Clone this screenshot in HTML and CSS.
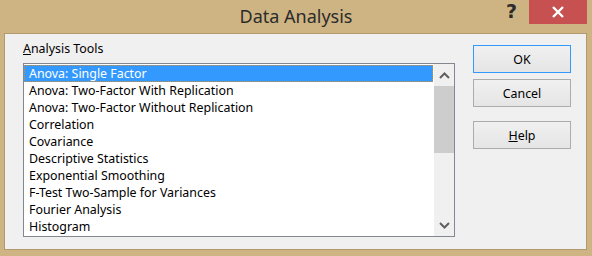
FILE: index.html
```html
<!DOCTYPE html>
<html>
<head>
<meta charset="utf-8">
<link rel="stylesheet" href="styles.css">
</head>
<body>
<div class="window">
  <div class="titlebar">
    <div class="tb-side"></div>
    <div class="title">Data Analysis</div>
    <div class="tb-side tb-controls">
      <span class="help-q">?</span>
      <span class="close-btn">
        <svg width="14" height="12" viewBox="0 0 14 12"><path d="M2 1 L12 11 M12 1 L2 11" stroke="#fff" stroke-width="2.4" fill="none"/></svg>
      </span>
    </div>
  </div>
  <div class="client">
    <div class="left">
      <div class="label"><u>A</u>nalysis Tools</div>
      <div class="listbox">
        <ul class="items">
          <li class="selected">Anova: Single Factor</li>
          <li>Anova: Two-Factor With Replication</li>
          <li>Anova: Two-Factor Without Replication</li>
          <li>Correlation</li>
          <li>Covariance</li>
          <li>Descriptive Statistics</li>
          <li>Exponential Smoothing</li>
          <li>F-Test Two-Sample for Variances</li>
          <li>Fourier Analysis</li>
          <li>Histogram</li>
        </ul>
        <div class="scrollbar">
          <div class="arrow">
            <svg width="11" height="7" viewBox="0 0 11 7"><path d="M1 6 L5.5 1.5 L10 6" stroke="#606060" stroke-width="2" fill="none"/></svg>
          </div>
          <div class="track"><div class="thumb"></div></div>
          <div class="arrow">
            <svg width="11" height="7" viewBox="0 0 11 7"><path d="M1 1 L5.5 5.5 L10 1" stroke="#606060" stroke-width="2" fill="none"/></svg>
          </div>
        </div>
      </div>
    </div>
    <div class="right">
      <button class="btn default">OK</button>
      <button class="btn">Cancel</button>
      <button class="btn help"><u>H</u>elp</button>
    </div>
  </div>
</div>
</body>
</html>
```
FILE: styles.css
```css
html, body {
  margin: 0;
  padding: 0;
  background: #cfb483;
}
.window {
  width: 592px;
  height: 256px;
  box-sizing: border-box;
  background: #cfb483;
  padding: 0 5px 6px 4px;
  display: flex;
  flex-direction: column;
  font-family: "Noto Sans", "Open Sans", sans-serif;
}
.titlebar {
  height: 33px;
  display: grid;
  grid-template-columns: 1fr auto 1fr;
  margin: 0 -5px 0 -4px;
}
.title {
  font-size: 18px;
  color: #2b2b2b;
  line-height: 33px;
}
.tb-controls {
  display: flex;
  justify-content: flex-end;
  align-items: flex-start;
}
.help-q {
  font-family: "DejaVu Sans", sans-serif;
  font-weight: bold;
  font-size: 19px;
  color: #2b2b2b;
  line-height: 22px;
  height: 24px;
  margin-right: 12px;
}
.close-btn {
  width: 58px;
  height: 24px;
  background: #c75050;
  display: flex;
  align-items: center;
  justify-content: center;
  margin-right: 5px;
}
.client {
  flex: 1;
  background: #f0f0f0;
  border: 1px solid #b39a6e;
  display: flex;
  padding: 0 0 0 18px;
}
.left {
  width: 432px;
  display: flex;
  flex-direction: column;
}
.label {
  font-size: 12.4px;
  color: #000;
  line-height: 17px;
  margin-top: 6px;
  margin-bottom: 6px;
}
.listbox {
  width: 432px;
  height: 174px;
  box-sizing: border-box;
  border: 1px solid #828790;
  background: #fff;
  display: flex;
  overflow: hidden;
}
.items {
  list-style: none;
  margin: 0;
  padding: 1px 0 0 0;
  flex: 1;
}
.items li {
  font-size: 12.4px;
  line-height: 17px;
  height: 17px;
  padding-left: 5px;
  color: #000;
  white-space: nowrap;
  box-sizing: border-box;
}
.items li.selected {
  background: #3399ff;
  color: #fff;
  outline: 1px dotted #d98c2a;
  outline-offset: -1px;
  margin-right: 1px;
}
.scrollbar {
  width: 20px;
  background: #f0f0f0;
  display: flex;
  flex-direction: column;
}
.arrow {
  height: 22px;
  display: flex;
  align-items: center;
  justify-content: center;
}
.track {
  flex: 1;
}
.thumb {
  height: 67px;
  background: #cdcdcd;
}
.right {
  margin-left: 18px;
  display: flex;
  flex-direction: column;
  padding-top: 11px;
}
.btn {
  width: 98px;
  height: 28px;
  box-sizing: border-box;
  border: 1px solid #acacac;
  background: linear-gradient(#f0f0f0, #e5e5e5);
  font-family: "Noto Sans", "Open Sans", sans-serif;
  font-size: 12.4px;
  color: #000;
  padding: 0;
  margin: 0 0 6px 0;
}
.btn.default {
  border-color: #3399ff;
}
.btn.help {
  margin-top: 8px;
}
```
